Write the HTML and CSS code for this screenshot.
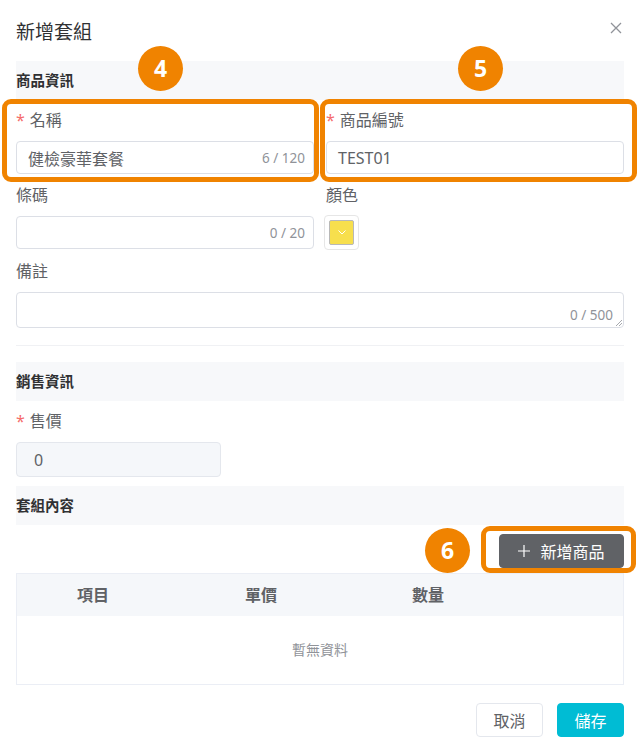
FILE: index.html
```html
<!DOCTYPE html>
<html lang="zh-Hant">
<head>
    <meta charset="UTF-8">
    <meta name="viewport" content="width=device-width, initial-scale=1.0">
    <title>新增套組</title>
    <link rel="stylesheet" href="styles.css">
</head>
<body>
    <div class="dialog">
        <div class="dialog-header">
            <span class="dialog-title">新增套組</span>
            <button class="close-btn" aria-label="close">
                <svg width="12" height="12" viewBox="0 0 12 12"><path d="M1 1L11 11M11 1L1 11" stroke="#909399" stroke-width="1.3" fill="none"/></svg>
            </button>
        </div>

        <div class="section-title">商品資訊</div>
        <div class="form-grid">
            <div class="form-item">
                <label class="required">名稱</label>
                <div class="input">
                    <span class="input-value">健檢豪華套餐</span>
                    <span class="counter">6 / 120</span>
                </div>
                <div class="callout callout-left"><span class="badge badge-4">4</span></div>
            </div>
            <div class="form-item">
                <label class="required">商品編號</label>
                <div class="input">
                    <span class="input-value">TEST01</span>
                </div>
                <div class="callout callout-right"><span class="badge badge-5">5</span></div>
            </div>
            <div class="form-item">
                <label>條碼</label>
                <div class="input">
                    <span class="input-value"></span>
                    <span class="counter">0 / 20</span>
                </div>
            </div>
            <div class="form-item">
                <label>顏色</label>
                <div class="color-picker">
                    <span class="color-swatch">
                        <svg width="8" height="5" viewBox="0 0 8 5"><path d="M0.5 0.5L4 4L7.5 0.5" stroke="#fff" stroke-width="1" fill="none"/></svg>
                    </span>
                </div>
            </div>
            <div class="form-item full">
                <label>備註</label>
                <div class="textarea">
                    <span class="counter">0 / 500</span>
                    <svg class="resize-grip" width="6" height="6" viewBox="0 0 6 6"><path d="M0 6L6 0M3 6L6 3" stroke="#909399" stroke-width="0.8"/></svg>
                </div>
            </div>
        </div>

        <div class="divider"></div>

        <div class="section-title">銷售資訊</div>
        <div class="form-item price-item">
            <label class="required">售價</label>
            <div class="input input-disabled">
                <span class="input-value">0</span>
            </div>
        </div>

        <div class="section-title">套組內容</div>
        <div class="toolbar">
            <button class="btn btn-dark">
                <svg width="12" height="12" viewBox="0 0 12 12"><path d="M6 0V12M0 6H12" stroke="#fff" stroke-width="1.2"/></svg>
                新增商品
                <span class="callout callout-btn"><span class="badge badge-6">6</span></span>
            </button>
        </div>

        <div class="table">
            <div class="table-head">
                <div class="cell">項目</div>
                <div class="cell">單價</div>
                <div class="cell">數量</div>
                <div class="cell"></div>
            </div>
            <div class="table-empty">暫無資料</div>
        </div>

        <div class="dialog-footer">
            <button class="btn btn-plain">取消</button>
            <button class="btn btn-primary">儲存</button>
        </div>
    </div>
</body>
</html>
```

FILE: styles.css
```css
body {
    margin: 0;
    background: #fff;
    font-family: "Noto Sans", "Noto Sans CJK TC", sans-serif;
    color: #606266;
}

.dialog {
    width: 608px;
    padding: 0 16px;
}

.dialog-header {
    height: 61px;
    display: flex;
    align-items: center;
    justify-content: space-between;
}

.dialog-title {
    font-size: 19px;
    color: #303133;
}

.close-btn {
    border: none;
    background: none;
    padding: 0;
    margin: 0 2px 6px 0;
    display: flex;
}

.section-title {
    height: 39px;
    line-height: 39px;
    background: #f7f8fa;
    font-size: 14.5px;
    font-weight: 700;
    color: #303133;
    margin-bottom: 5px;
}

.form-grid {
    display: grid;
    grid-template-columns: 1fr 1fr;
    column-gap: 12px;
}

.form-item {
    position: relative;
    margin-bottom: 6px;
}

.form-item.full {
    grid-column: 1 / 3;
}

.form-item label {
    display: block;
    height: 30px;
    line-height: 30px;
    font-size: 16px;
    margin-bottom: 6px;
}

.form-item label.required::before {
    content: "*";
    color: #f56c6c;
    margin-right: 5px;
}

.input {
    height: 33px;
    box-sizing: border-box;
    border: 1px solid #dcdfe6;
    border-radius: 4px;
    display: flex;
    align-items: center;
    justify-content: space-between;
    padding: 0 8px 0 11px;
    font-size: 16px;
}

.input-value {
    color: #606266;
}

.counter {
    font-size: 13.5px;
    color: #909399;
}

.input-disabled {
    background: #f5f7fa;
    border-color: #e4e7ed;
    height: 35px;
    padding-left: 17px;
}

.price-item {
    width: 205px;
    margin-bottom: 9px;
}

.color-picker {
    width: 35px;
    height: 35px;
    box-sizing: border-box;
    border: 1px solid #e6e6e6;
    border-radius: 4px;
    display: flex;
    align-items: center;
    justify-content: center;
    margin: -1px 0 0 -2px;
}

.color-swatch {
    width: 25px;
    height: 25px;
    box-sizing: border-box;
    background: #f7df4d;
    border: 1px solid #b8b8b8;
    border-radius: 2px;
    display: flex;
    align-items: center;
    justify-content: center;
}

.textarea {
    position: relative;
    height: 36px;
    box-sizing: border-box;
    border: 1px solid #dcdfe6;
    border-radius: 4px;
}

.textarea .counter {
    position: absolute;
    right: 10px;
    bottom: 3px;
}

.resize-grip {
    position: absolute;
    right: 1px;
    bottom: 1px;
}

.divider {
    height: 1px;
    background: #f0f1f4;
    margin: 11px 0 16px;
}

.toolbar {
    display: flex;
    justify-content: flex-end;
    margin: 9px 0 5px;
}

.btn {
    height: 34px;
    box-sizing: border-box;
    border-radius: 4px;
    font-family: inherit;
    font-size: 16px;
    display: inline-flex;
    align-items: center;
    justify-content: center;
    cursor: pointer;
}

.btn-dark {
    position: relative;
    width: 125px;
    background: #606266;
    border: 1px solid #606266;
    color: #fff;
    gap: 10px;
    padding: 0;
}

.btn-plain {
    width: 67px;
    background: #fff;
    border: 1px solid #e4e7ed;
    color: #606266;
}

.btn-primary {
    width: 67px;
    background: #00bcd4;
    border: 1px solid #00bcd4;
    color: #fff;
}

.table {
    border: 1px solid #ebeef5;
}

.table-head {
    display: grid;
    grid-template-columns: 168px 167px 167px 1fr;
    height: 42px;
    background: #f5f7fa;
    font-size: 16px;
    font-weight: 700;
    color: #606266;
}

.table-head .cell {
    line-height: 42px;
    padding-left: 60px;
}

.table-empty {
    height: 68px;
    line-height: 68px;
    text-align: center;
    font-size: 14px;
    color: #909399;
}

.dialog-footer {
    display: flex;
    justify-content: flex-end;
    gap: 14px;
    margin-top: 18px;
}

/* orange highlight frames and numbered markers */
.callout {
    position: absolute;
    border: 5px solid #f08300;
    border-radius: 9px;
    pointer-events: none;
}

.callout-left {
    top: -6px;
    bottom: -8px;
    left: -14px;
    right: -5px;
}

.callout-right {
    top: -6px;
    bottom: -8px;
    left: -6px;
    right: -13px;
}

.callout-btn {
    top: -9px;
    bottom: -6px;
    left: -19px;
    right: -13px;
}

.badge {
    position: absolute;
    width: 45px;
    height: 45px;
    border-radius: 50%;
    background: #f08300;
    color: #fff;
    font-family: "Open Sans", sans-serif;
    font-weight: 700;
    font-size: 23px;
    line-height: 45px;
    text-align: center;
}

.badge-4 {
    top: -58px;
    left: 131px;
}

.badge-5 {
    top: -58px;
    left: 133px;
}

.badge-6 {
    top: -3px;
    left: -61px;
}
```
